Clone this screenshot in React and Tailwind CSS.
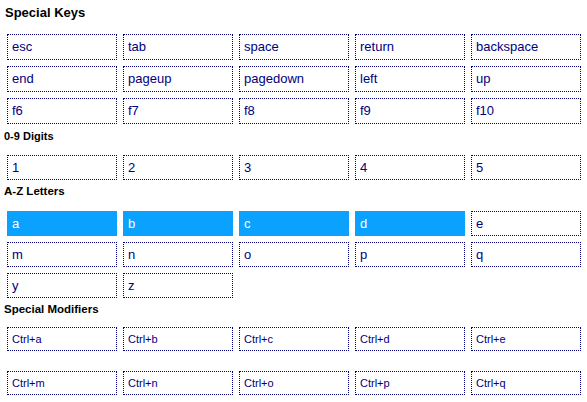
import React from "react";

const specialKeys = ["esc", "tab", "space", "return", "backspace", "end", "pageup", "pagedown", "left", "up", "f6", "f7", "f8", "f9", "f10"];
const digits = ["1", "2", "3", "4", "5"];
const letters = ["a", "b", "c", "d", "e", "m", "n", "o", "p", "q", "y", "z"];
const selected = ["a", "b", "c", "d"];
const modifiers = ["Ctrl+a", "Ctrl+b", "Ctrl+c", "Ctrl+d", "Ctrl+e", "Ctrl+m", "Ctrl+n", "Ctrl+o", "Ctrl+p", "Ctrl+q"];

const Key = ({ label, active, small, height }) => (
  <div
    className={`flex items-center pl-[4px] ${height} ${
      active
        ? "bg-[#0ba1ff] text-white border border-[#0ba1ff]"
        : "border border-dotted border-[#000080] text-[#000080]"
    } ${small ? "text-[11px]" : "text-[13px]"}`}
  >
    {label}
  </div>
);

const KeyGrid = ({ keys, rowGap, height, small }) => (
  <div className={`grid grid-cols-[repeat(5,110px)] gap-x-[6px] ${rowGap} pl-[7px]`}>
    {keys.map((k) => (
      <Key key={k} label={k} active={selected.includes(k)} small={small} height={height} />
    ))}
  </div>
);

export default function App() {
  return (
    <div
      className="w-[587px] h-[402px] bg-white overflow-hidden"
      style={{ fontFamily: '"Liberation Sans", Arial, sans-serif' }}
    >
      {/* Special keys */}
      <h1 className="pl-[5px] pt-[5px] h-[34px] text-[13px] leading-[16px] font-bold text-black">Special Keys</h1>
      <KeyGrid keys={specialKeys} rowGap="gap-y-[6px]" height="h-[26px]" />

      {/* Digits */}
      <h2 className="pl-[4px] mt-[5px] h-[26px] text-[11px] leading-[14px] font-bold text-black">0-9 Digits</h2>
      <KeyGrid keys={digits} rowGap="gap-y-[6px]" height="h-[25px]" />

      {/* Letters */}
      <h2 className="pl-[4px] mt-[4px] h-[27px] text-[11.5px] leading-[14px] font-bold text-black">A-Z Letters</h2>
      <KeyGrid keys={letters} rowGap="gap-y-[6px]" height="h-[25px]" />

      {/* Modifiers */}
      <h2 className="pl-[4px] mt-[4px] h-[25px] text-[11.5px] leading-[14px] font-bold text-black">Special Modifiers</h2>
      <KeyGrid keys={modifiers} rowGap="gap-y-[20px]" height="h-[24px]" small />
    </div>
  );
}
